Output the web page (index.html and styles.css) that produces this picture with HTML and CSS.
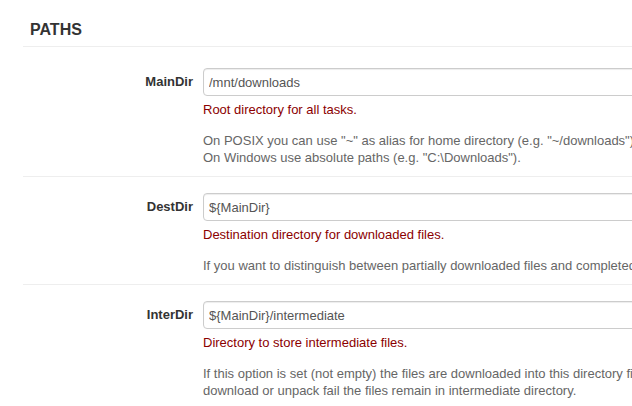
FILE: index.html
```html
<!DOCTYPE html>
<html lang="en">
<head>
    <meta charset="UTF-8">
    <title>Settings - Paths</title>
    <link rel="stylesheet" href="styles.css">
</head>
<body>
    <div class="section">
        <h4 class="section-title">PATHS</h4>

        <div class="option">
            <label class="option-label">MainDir</label>
            <div class="option-controls">
                <input class="option-input" type="text" value="/mnt/downloads">
                <p class="option-name">Root directory for all tasks.</p>
                <p class="option-help">On POSIX you can use "~" as alias for home directory (e.g. "~/downloads").<br>On Windows use absolute paths (e.g. "C:\Downloads").</p>
            </div>
        </div>

        <div class="option">
            <label class="option-label">DestDir</label>
            <div class="option-controls">
                <input class="option-input" type="text" value="${MainDir}">
                <p class="option-name">Destination directory for downloaded files.</p>
                <p class="option-help">If you want to distinguish between partially downloaded files and completed downloads, use also option InterDir.</p>
            </div>
        </div>

        <div class="option">
            <label class="option-label">InterDir</label>
            <div class="option-controls">
                <input class="option-input" type="text" value="${MainDir}/intermediate">
                <p class="option-name">Directory to store intermediate files.</p>
                <p class="option-help">If this option is set (not empty) the files are downloaded into this directory first. On successful<br>download or unpack fail the files remain in intermediate directory.</p>
            </div>
        </div>
    </div>
</body>
</html>
```

FILE: styles.css
```css
body {
    margin: 0;
    font-family: "Liberation Sans", Arial, sans-serif;
    font-size: 13px;
    line-height: 17px;
    color: #333;
    background: #fff;
    overflow: hidden;
}
.section {
    padding: 20px 0 0 23px;
    width: 1000px;
}
.section-title {
    margin: 0;
    padding: 0 0 6px 7px;
    font-size: 16px;
    font-weight: bold;
    line-height: 20px;
    color: #333;
    border-bottom: 1px solid #eee;
}
.option {
    display: flex;
    padding: 21px 0 10px;
    border-bottom: 1px solid #eee;
}
.option + .option {
    padding-top: 16px;
}
.option-label {
    width: 170px;
    padding-top: 5px;
    padding-right: 10px;
    text-align: right;
    font-weight: bold;
}
.option-controls {
    flex: 1;
}
.option-input {
    display: block;
    box-sizing: border-box;
    width: 600px;
    height: 28px;
    margin: 0;
    padding: 4px 5px;
    font-family: "Liberation Sans", Arial, sans-serif;
    font-size: 13px;
    color: #555;
    border: 1px solid #ccc;
    border-radius: 4px;
    box-shadow: inset 0 1px 1px rgba(0, 0, 0, 0.075);
}
.option-name {
    margin: 5px 0 14px;
    color: #8b0000;
}
.option-help {
    margin: 0;
    color: #666;
}
```
